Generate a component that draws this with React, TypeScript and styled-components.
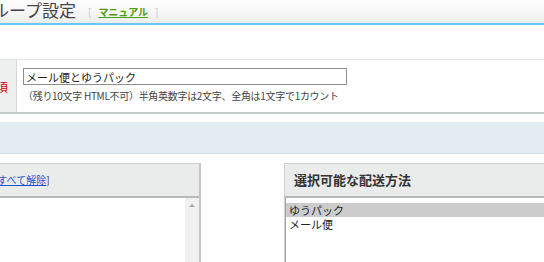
import styled, { createGlobalStyle } from "styled-components";

const GlobalStyle = createGlobalStyle`
  html, body {
    margin: 0;
    padding: 0;
    overflow: hidden;
    background: #fff;
  }
  body {
    font-family: "Noto Sans CJK JP", "Noto Sans", sans-serif;
    color: #333;
  }
`;

// the screenshot is a horizontally scrolled view of a wider admin page
const Page = styled.div`
  width: 860px;
  margin-left: -140px;
`;

const Header = styled.div`
  display: flex;
  align-items: flex-start;
  height: 23px;
  padding-left: 81px;
  background: linear-gradient(#ffffff, #eceeec);
  border-bottom: 2px solid #6cc6f6;
`;

const Title = styled.h1`
  margin: 1px 0 0;
  font-size: 17px;
  line-height: 17px;
  font-weight: normal;
  color: #444;
`;

const Manual = styled.span`
  margin: 6px 0 0 12px;
  font-size: 10px;
  line-height: 12px;
  color: #c8c8c8;

  a {
    margin: 0 7px;
    color: #4d9d12;
    font-weight: bold;
    text-decoration: underline;
  }
`;

const FormRow = styled.div`
  display: flex;
  margin-top: 34px;
  border-top: 1px solid #e4e6e6;
  border-bottom: 2px solid #c6caca;
`;

const Label = styled.div`
  display: flex;
  align-items: center;
  justify-content: flex-end;
  width: 148px;
  padding-right: 8px;
  background: #eef0f0;
  border-right: 1px solid #d4d7d7;
  font-size: 12px;
  color: #333;
`;

const Required = styled.span`
  margin-left: 4px;
  color: #d40000;
`;

const Field = styled.div`
  flex: 1;
  height: 52px;
  padding: 8px 0 0 6px;
  box-sizing: border-box;
`;

const TextInput = styled.input`
  display: block;
  box-sizing: border-box;
  width: 324px;
  height: 17px;
  margin: 0;
  padding: 0 2px;
  border: 1px solid #8f8f8f;
  font-family: inherit;
  font-size: 11px;
  color: #222;
  outline: none;
`;

const Hint = styled.div`
  margin-top: 4px;
  font-size: 10px;
  line-height: 14px;
  color: #444;
  letter-spacing: -0.3px;
`;

const Band = styled.div`
  height: 31px;
  margin-top: 8px;
  background: #e3ecf1;
  border-bottom: 1px solid #d3e1e8;
`;

const Columns = styled.div`
  display: flex;
  align-items: flex-start;
  margin-top: 9px;
  padding-left: 10px;
  gap: 83px;
`;

const Panel = styled.div<{ $width: number }>`
  width: ${(p) => p.$width}px;
  box-sizing: border-box;
  border: 1px solid #cfd1d1;
  border-right: 2px solid #c4c6c6;
`;

const PanelHead = styled.div<{ $pad: number }>`
  display: flex;
  align-items: center;
  height: 30px;
  padding: 0 0 2px ${(p) => p.$pad}px;
  background: #eaecec;
  border-bottom: 2px solid #b8baba;
  font-size: 13px;
  font-weight: bold;
  color: #333;
`;

const Links = styled.span`
  font-size: 10px;
  font-weight: normal;
  color: #333;

  a {
    color: #1f4fd0;
    text-decoration: underline;
  }
`;

const ScrollList = styled.div`
  display: flex;
  justify-content: flex-end;
  height: 80px;
  background: #fff;
`;

const ScrollTrack = styled.div`
  width: 14px;
  background: #f1f1f1;
  display: flex;
  justify-content: center;
  padding-top: 6px;
`;

const UpArrow = styled.div`
  width: 0;
  height: 0;
  border-left: 3px solid transparent;
  border-right: 3px solid transparent;
  border-bottom: 3px solid #a3a3a3;
`;

const Options = styled.div`
  height: 60px;
  padding-top: 5px;
  border-left: 1px solid #a3a3a3;
  background: #fff;
`;

const Option = styled.div<{ $selected?: boolean }>`
  height: 14px;
  padding-left: 3px;
  font-size: 11px;
  line-height: 14px;
  color: #222;
  overflow: hidden;
  background: ${(p) => (p.$selected ? "#cccccc" : "transparent")};
`;

export default function App() {
  return (
    <>
      <GlobalStyle />
      <Page>
        <Header>
          <Title>配送グループ設定</Title>
          <Manual>
            [<a href="#">マニュアル</a>]
          </Manual>
        </Header>

        <FormRow>
          <Label>
            グループ名<Required>必須</Required>
          </Label>
          <Field>
            <TextInput defaultValue="メール便とゆうパック" />
            <Hint>（残り10文字 HTML不可）半角英数字は2文字、全角は1文字で1カウント</Hint>
          </Field>
        </FormRow>

        <Band />

        <Columns>
          <Panel $width={331}>
            <PanelHead $pad={65}>
              <Links>
                [<a href="#">すべて選択</a>] [<a href="#">すべて解除</a>]
              </Links>
            </PanelHead>
            <ScrollList>
              <ScrollTrack>
                <UpArrow />
              </ScrollTrack>
            </ScrollList>
          </Panel>

          <Panel $width={320}>
            <PanelHead $pad={9}>選択可能な配送方法</PanelHead>
            <Options>
              <Option $selected>ゆうパック</Option>
              <Option>メール便</Option>
            </Options>
          </Panel>
        </Columns>
      </Page>
    </>
  );
}
